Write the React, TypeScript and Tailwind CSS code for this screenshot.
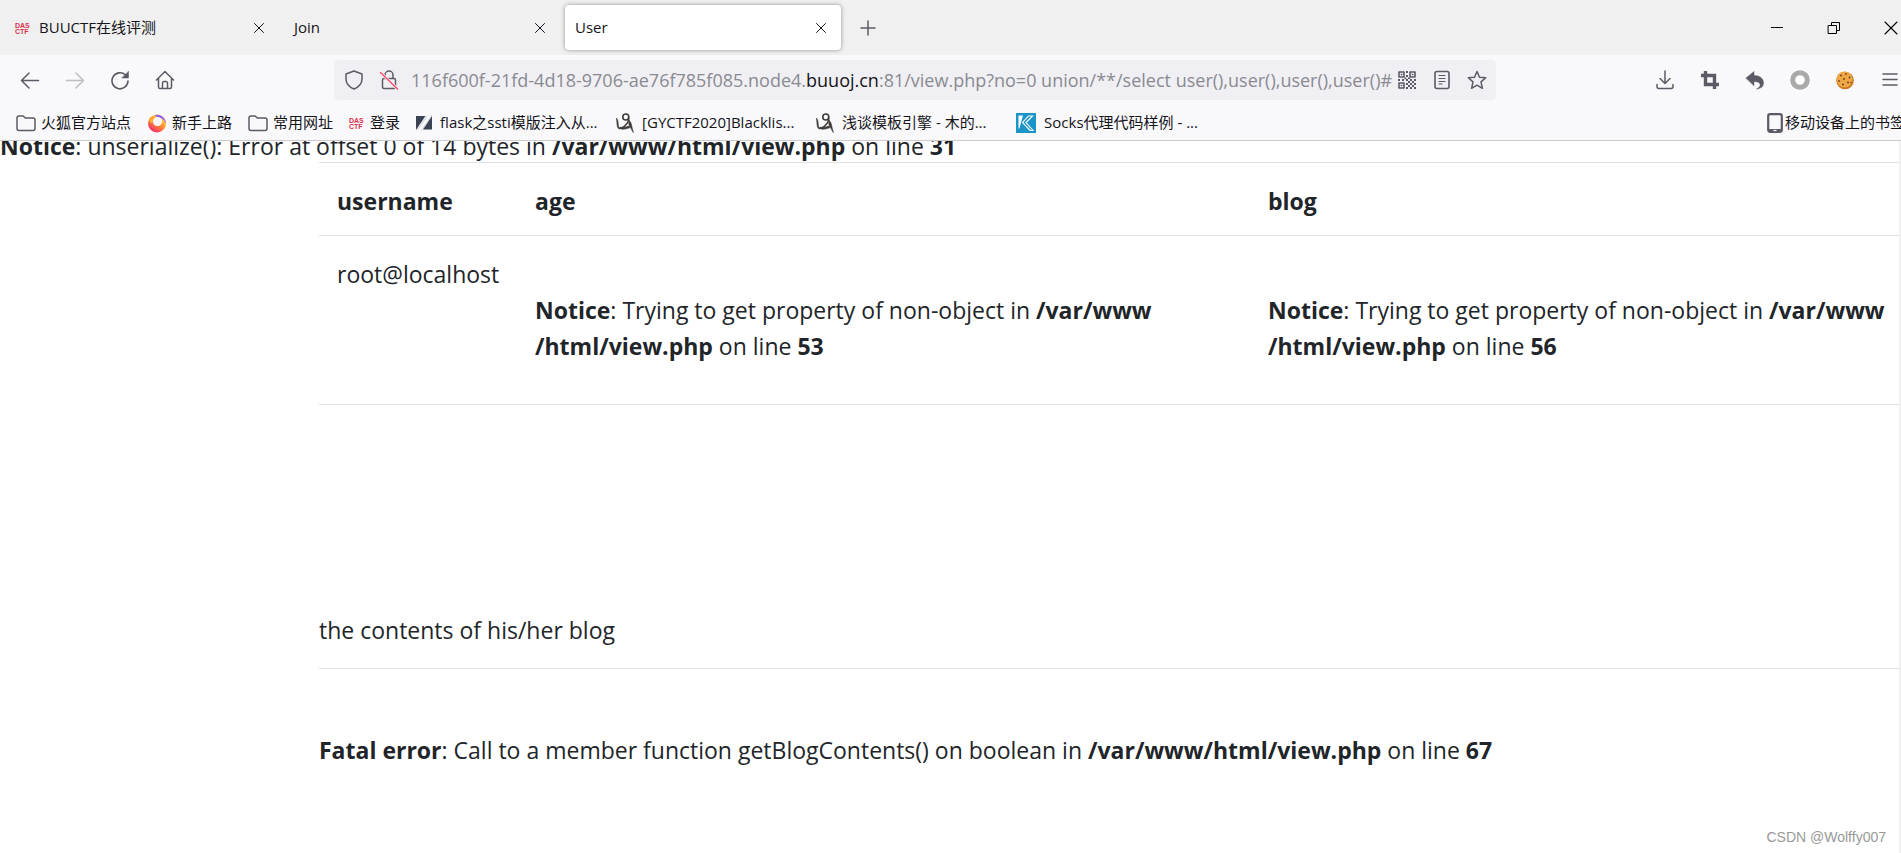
import type { ReactNode } from "react";

type IconProps = { children: ReactNode; size?: string; box?: string; className?: string };

function Icon({ children, size = "size-5", box = "0 0 20 20", className = "" }: IconProps) {
  return (
    <svg
      viewBox={box}
      className={`${size} shrink-0 ${className}`}
      fill="none"
      stroke="currentColor"
      strokeWidth="1.5"
      strokeLinecap="round"
      strokeLinejoin="round"
      aria-hidden="true"
    >
      {children}
    </svg>
  );
}

function DasIcon() {
  return (
    <svg viewBox="0 0 16 14" className="h-3.5 w-4 shrink-0 fill-[#d9304c] font-['Liberation_Sans'] text-[7px] font-bold" aria-hidden="true">
      <text x="0" y="7">DAS</text>
      <text x="0" y="13">CTF</text>
    </svg>
  );
}

function FolderIcon() {
  return (
    <Icon className="text-[#5b5b66]">
      <path d="M1 5a2 2 0 0 1 2-2h3.500a2 2 0 0 1 1.500.7L9.300 5H17a2 2 0 0 1 2 2v8.500a2 2 0 0 1-2 2H3a2 2 0 0 1-2-2z" />
    </Icon>
  );
}

function FirefoxIcon() {
  return (
    <svg viewBox="0 0 20 20" className="size-5 shrink-0" aria-hidden="true">
      <defs>
        <linearGradient id="fox" x1="0.9" y1="0.1" x2="0.3" y2="1">
          <stop offset="0" stopColor="#ffe14a" />
          <stop offset="0.45" stopColor="#ff9a2e" />
          <stop offset="1" stopColor="#f5246e" />
        </linearGradient>
      </defs>
      <circle cx="10" cy="10.500" r="9" fill="url(#fox)" />
      <path d="M8 2a9 9 0 0 1 11 9c-1-4-4-6-7-6.500C10 4 9 3.500 8 2z" fill="#9059ff" />
      <circle cx="10.500" cy="8.500" r="4.600" fill="#f9f4fb" />
      <path d="M2 5c1 1.500 3 1.200 5 1.500-1 1-1.800 2-1.300 4C3.500 10 2 8 2 5z" fill="#ffb52e" />
    </svg>
  );
}

function SlashIcon() {
  return (
    <svg viewBox="0 0 16 16" className="size-4 shrink-0 fill-[#3b4252]" aria-hidden="true">
      <path d="M0 1h9.500L0 15z" />
      <path d="M16 1v13.500H7z" />
      <path d="M13.500 0h2L5 15.500H3z" fill="#fff" />
      <path d="M15.800 0 5 15.800M11.500.5 1 15.500" stroke="#b4b7bf" strokeWidth="0.600" />
    </svg>
  );
}

function BlogIcon() {
  return (
    <svg viewBox="0 0 18 20" className="h-5 w-[18px] shrink-0 text-[#3d3a37]" fill="none" stroke="currentColor" aria-hidden="true">
      <circle cx="9.800" cy="4" r="3" strokeWidth="1.600" />
      <path d="M12.800 4.500c0 4.500-3.300 8.800-8 11" strokeWidth="1.500" />
      <path d="M4 14.200c3 .6 6-.2 9.500-1.200v1.800c-3.500 1.400-7 1.800-10 .8z" fill="currentColor" strokeWidth="0.600" />
      <path d="M0 5c1.800 1 2 2.500 2.200 5.500.1 2.500.5 4 2.300 5L2.800 16C1.200 14.500 1 12.500.9 10c-.1-2-.2-3.500-.9-5z" fill="currentColor" strokeWidth="0.500" />
      <path d="M12.700 6.500 15 10l2.300 9.500L13 12z" fill="currentColor" strokeWidth="0.600" />
    </svg>
  );
}

function KIcon() {
  return (
    <svg viewBox="0 0 20 20" className="size-5 shrink-0" aria-hidden="true">
      <path d="M0 0h20v20H0z" fill="#1b94c8" />
      <path d="M2.500 2.500H7L3.500 15l-1 1z" fill="#fff" />
      <path d="M16.500 3h-4L6.500 9.500l7.500 8h3l-7-8z" fill="none" stroke="#fff" strokeWidth="1.100" />
    </svg>
  );
}

function CloseIcon() {
  return (
    <Icon size="size-3" box="0 0 12 12">
      <path d="m1.500 1.500 9 9m0-9-9 9" strokeWidth="1" />
    </Icon>
  );
}

const tabs = [
  { title: "BUUCTF在线评测", icon: <DasIcon /> },
  { title: "Join" },
  { title: "User", active: true },
];

const bookmarks = [
  { label: "火狐官方站点", icon: <FolderIcon /> },
  { label: "新手上路", icon: <FirefoxIcon /> },
  { label: "常用网址", icon: <FolderIcon /> },
  { label: "登录", icon: <DasIcon /> },
  { label: "flask之ssti模版注入从...", icon: <SlashIcon />, wide: true },
  { label: "[GYCTF2020]Blacklis...", icon: <BlogIcon />, wide: true },
  { label: "浅谈模板引擎 - 木的...", icon: <BlogIcon />, wide: true },
  { label: "Socks代理代码样例 - ...", icon: <KIcon />, wide: true },
];

function TabStrip() {
  return (
    <div className="flex h-[55px] items-center justify-between bg-[#f0f0f0] pl-[3px] text-[#15141a]">
      <div className="flex items-center gap-[5px]">
        {tabs.map((t) => (
          <div
            key={t.title}
            className={`flex h-[45px] w-[276px] items-center justify-between rounded pr-3.5 ${t.icon ? "pl-3" : "pl-2.5"} ${
              t.active ? "bg-white shadow-[0_0_4px_rgba(0,0,0,0.4)]" : ""
            }`}
          >
            <button type="button" className="flex items-center gap-2 text-[15px]">
              {t.icon}
              {t.title}
            </button>
            <button type="button" aria-label={`Close ${t.title}`}>
              <CloseIcon />
            </button>
          </div>
        ))}
        <button type="button" aria-label="New tab" className="ml-2.5 p-1 text-[#5b5b66]">
          <Icon size="size-4" box="0 0 16 16">
            <path d="M8 1v14M1 8h14" />
          </Icon>
        </button>
      </div>
      <div className="flex items-center gap-[43px] pr-[3px] text-black">
        <button type="button" aria-label="Minimize">
          <Icon size="size-3.5" box="0 0 14 14">
            <path d="M1.500 6.500h11" strokeWidth="1" strokeLinecap="square" />
          </Icon>
        </button>
        <button type="button" aria-label="Restore">
          <Icon size="size-3.5" box="0 0 14 14">
            <path d="M1.500 4.500h8v8h-8zM4.500 4v-2.500h8v8H10" strokeWidth="1" strokeLinejoin="miter" />
          </Icon>
        </button>
        <button type="button" aria-label="Close window">
          <Icon size="size-3.5" box="0 0 14 14">
            <path d="m1 1 12 12m0-12L1 13" strokeWidth="1.100" />
          </Icon>
        </button>
      </div>
    </div>
  );
}

const host = "116f600f-21fd-4d18-9706-ae76f785f085.node4.";
const domain = "buuoj.cn";
const path = ":81/view.php?no=0 union/**/select user(),user(),user(),user()#";

function AddressBar() {
  return (
    <div className="flex h-10 w-[1162px] min-w-0 items-center rounded bg-[#f0f0f4] pr-[9px] pl-2.5 text-[#5b5b66]">
      <button type="button" aria-label="Tracking protection">
        <Icon>
          <path d="M10 1 18 4v5c0 5-3 8-8 10-5-2-8-5-8-10V4z" />
        </Icon>
      </button>
      <button type="button" aria-label="Connection not secure" className="ml-[15px]">
        <Icon>
          <path d="M6 8.500V5a4 4 0 0 1 8 0v3.500M5 8.500h10a1.500 1.500 0 0 1 1.500 1.500v7a1.500 1.500 0 0 1-1.500 1.500H5A1.500 1.500 0 0 1 3.500 17v-7A1.500 1.500 0 0 1 5 8.500z" />
          <path d="m2 3 16 15.500" stroke="#f0f0f4" strokeWidth="3" />
          <path d="m1.500 2.500 17 16.500" stroke="#ff4f6e" />
        </Icon>
      </button>
      <div className="relative ml-3 min-w-0 flex-1 overflow-hidden text-[18px] leading-7 whitespace-nowrap text-[#8a8a91]">
        <span aria-hidden="true">
          {host}
          <span className="text-[#15141a]">{domain}</span>
          {path}
        </span>
        <input
          aria-label="Address"
          defaultValue={host + domain + path}
          className="absolute inset-0 w-full bg-transparent text-transparent caret-black outline-none"
        />
      </div>
      <div className="flex items-center gap-[15px]">
        <button type="button" aria-label="QR code">
          <Icon>
            <path
              d="M2 2h5v5H2zM13 2h5v5h-5zM2 13h5v5H2z"
              strokeWidth="1.600"
            />
            <path
              d="M3.700 3.700h1.600v1.600H3.700zM14.700 3.700h1.600v1.600h-1.600zM3.700 14.700h1.600v1.600H3.700zM9 1h2v2H9zM9 5h2v2H9zM1 9h2v2H1zM5 9h2v2H5zM9 9h2v2H9zM13 9h2v2h-2zM17 9h2v2h-2zM7.500 7.500h1.800v1.800H7.500zM11 7.500h2V9h-2zM11 11h2v2h-2zM15 11h2v2h-2zM9 13h2v2H9zM13 13h2v2h-2zM17 13h2v2h-2zM11 15h2v2h-2zM15 15h2v2h-2zM9 17h2v2H9zM13 17h2v2h-2zM17 17h2v2h-2z"
              fill="currentColor"
              stroke="none"
            />
          </Icon>
        </button>
        <button type="button" aria-label="Reader view">
          <Icon>
            <rect x="3" y="1.500" width="14" height="17" rx="2" strokeWidth="1.600" />
            <path d="M7 5.500h6M7 8.500h6M7 11.500h6M7 14h3" strokeWidth="1.200" />
          </Icon>
        </button>
        <button type="button" aria-label="Bookmark this page">
          <Icon>
            <path d="m10 1.500 2.500 5.700 6.200.6-4.700 4.100 1.400 6.400L10 15.200l-5.400 3.100L6 11.900 1.300 7.800l6.200-.6z" />
          </Icon>
        </button>
      </div>
    </div>
  );
}

function NavBar() {
  return (
    <div className="flex h-[50px] items-center justify-between pr-px pl-5 text-[#5b5b66]">
      <div className="flex items-center gap-[25px]">
        <button type="button" aria-label="Back">
          <Icon>
            <path d="M18.500 10.500h-17M9 3l-7.500 7.500L9 18" />
          </Icon>
        </button>
        <button type="button" aria-label="Forward" disabled className="text-[#bdbdc4]">
          <Icon>
            <path d="M1.500 10.500h17M11 3l7.500 7.500L11 18" />
          </Icon>
        </button>
        <button type="button" aria-label="Reload">
          <Icon>
            <path d="M18 11a8 8 0 1 1-2.500-6" strokeWidth="1.600" />
            <path d="M18.500 1.500v6.500H12z" fill="currentColor" strokeWidth="0.500" />
          </Icon>
        </button>
        <button type="button" aria-label="Home">
          <Icon>
            <path d="M1.500 10 10 1.500l8.500 8.500M3.500 8.500V17A1.500 1.500 0 0 0 5 18.500h10a1.500 1.500 0 0 0 1.500-1.500V8.500M7.500 18v-5A1.500 1.500 0 0 1 9 11.500h2a1.500 1.500 0 0 1 1.500 1.500v5" />
          </Icon>
        </button>
      </div>
      <AddressBar />
      <div className="flex items-center gap-[25px]">
        <button type="button" aria-label="Downloads">
          <Icon>
            <path d="M10 1v12M5 8.500l5 5 5-5M2 14.500v2a2 2 0 0 0 2 2h12a2 2 0 0 0 2-2v-2" />
          </Icon>
        </button>
        <button type="button" aria-label="Screenshot">
          <Icon>
            <path d="M5.500 1v13.500H19M1 5.500h13.500V19" strokeWidth="3.400" strokeLinecap="butt" strokeLinejoin="miter" />
          </Icon>
        </button>
        <button type="button" aria-label="Undo close tab">
          <Icon>
            <path d="M1 8 9 1.500v4c6 0 9.500 3 9.500 7.500 0 3.500-2.500 5.500-7 6 3-1.500 4-3 3.500-5-.5-1.500-2.500-2.500-6-2.500v4z" fill="currentColor" strokeWidth="0.500" />
          </Icon>
        </button>
        <button type="button" aria-label="Proxy">
          <Icon className="text-[#a9a9a9]">
            <circle cx="10" cy="10" r="7.300" fill="#fff" strokeWidth="5" />
          </Icon>
        </button>
        <button type="button" aria-label="Cookies">
          <svg viewBox="0 0 20 20" className="size-5" aria-hidden="true">
            <circle cx="10" cy="10.500" r="8.800" fill="#c9751d" />
            <circle cx="9.500" cy="9.500" r="8" fill="#eda744" />
            <g fill="#7a431c">
              <circle cx="6" cy="5.500" r="1" />
              <circle cx="11" cy="4" r=".9" />
              <circle cx="14.500" cy="7.500" r="1" />
              <circle cx="9" cy="9" r="1" />
              <circle cx="4" cy="11" r=".9" />
              <circle cx="13" cy="12.500" r="1" />
              <circle cx="8" cy="14.500" r="1" />
              <circle cx="16" cy="12.500" r=".8" />
            </g>
          </svg>
        </button>
        <button type="button" aria-label="Menu">
          <Icon>
            <path d="M3 4h14M3 9.500h14M3 15h14" />
          </Icon>
        </button>
      </div>
    </div>
  );
}

function BookmarksBar() {
  return (
    <div className="flex h-[35px] items-center justify-between overflow-hidden pl-4 text-[15px] whitespace-nowrap text-[#15141a]">
      <div className="flex items-center gap-4">
        {bookmarks.map((b) => (
          <a key={b.label} href="#" className={`flex items-center ${b.wide ? "w-[184px] gap-2" : "gap-[5px]"}`}>
            {b.icon}
            {b.label}
          </a>
        ))}
      </div>
      <a href="#" className="-mr-1 flex items-center gap-0.5">
        <svg viewBox="0 0 16 20" className="h-5 w-4 text-[#5b5b66]" fill="none" stroke="currentColor" aria-hidden="true">
          <rect x="1.200" y="1.200" width="13.600" height="17.600" rx="2" strokeWidth="2.200" />
          <path d="M1 17.500h14" strokeWidth="3" />
          <path d="M6.500 17.500h3" stroke="#fff" strokeWidth="1.200" />
        </svg>
        移动设备上的书签
      </a>
    </div>
  );
}

function Notice({ line }: { line: number }) {
  return (
    <>
      <br />
      <b>Notice</b>: Trying to get property of non-object in <b>/var/www</b>
      <br />
      <b>/html/view.php</b> on line <b>{line}</b>
    </>
  );
}

export default function App() {
  return (
    <div className="relative flex min-h-screen flex-col bg-white font-['Open_Sans','Noto_Sans_CJK_SC',sans-serif]">
      <header className="border-b border-[#cccccc] bg-[#f9f9fb]">
        <TabStrip />
        <NavBar />
        <BookmarksBar />
      </header>

      {/* page is scrolled a little, so the first line is clipped */}
      <main className="flex-1 overflow-hidden border-r-2 border-[#f0f0f0] text-[23px] leading-9 whitespace-nowrap text-[#212529]">
        <p className="-mt-[11px] leading-8">
          <b>Notice</b>: unserialize(): Error at offset 0 of 14 bytes in <b>/var/www/html/view.php</b> on line <b>31</b>
        </p>
        <div className="pl-[319px]">
          <table className="w-full table-fixed text-left">
            <colgroup>
              <col className="w-[198px]" />
              <col className="w-[733px]" />
              <col />
            </colgroup>
            <thead>
              <tr className="border-y border-[#dee2e6]">
                <th className="px-[18px] pt-5 pb-4">username</th>
                <th className="px-[18px] pt-5 pb-4">age</th>
                <th className="px-[18px] pt-5 pb-4">blog</th>
              </tr>
            </thead>
            <tbody>
              <tr className="border-b border-[#dee2e6] align-top">
                <td className="px-[18px] pt-5 pb-10">root@localhost</td>
                <td className="px-[18px] pt-5 pb-10">
                  <Notice line={53} />
                </td>
                <td className="pt-5 pb-10 pl-[18px]">
                  <Notice line={56} />
                </td>
              </tr>
            </tbody>
          </table>
          <p className="mt-[207px]">the contents of his/her blog</p>
          <hr className="mt-5 border-[#e3e3e4]" />
          <p className="mt-[63px]">
            <b>Fatal error</b>: Call to a member function getBlogContents() on boolean in <b>/var/www/html/view.php</b> on line <b>67</b>
          </p>
        </div>
      </main>

      <footer className="absolute right-[15px] bottom-1.5 font-['Liberation_Sans',sans-serif] text-sm text-[#999999]">CSDN @Wolffy007</footer>
    </div>
  );
}
